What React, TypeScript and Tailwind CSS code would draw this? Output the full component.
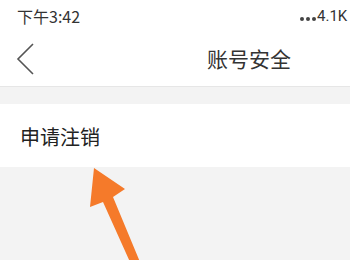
import React from "react";

export default function App() {
  const font = { fontFamily: '"Noto Sans CJK SC", "Noto Sans", Roboto, sans-serif' };
  return (
    <div className="relative w-[350px] h-[260px] overflow-hidden bg-[#f3f3f3]" style={font}>
      <div className="h-[28px] bg-white flex items-center justify-between pl-[17px] text-[16px] leading-none text-[#333]">
        <span className="pt-[4px]">下午3:42</span>
        <span className="pt-[4px] w-[50px] flex items-end whitespace-nowrap">
          <span className="flex gap-[2px] mb-[3px] mr-[1px]">
            <span className="w-[4px] h-[4px] rounded-full bg-[#444]" />
            <span className="w-[4px] h-[4px] rounded-full bg-[#444]" />
            <span className="w-[4px] h-[4px] rounded-full bg-[#444]" />
          </span>
          <span className="text-[15px] text-[#333]" style={{ fontFamily: "Roboto, sans-serif" }}>4.1K</span>
        </span>
      </div>
      <div className="h-[59px] bg-white flex items-center border-b border-[#e6e6e6]">
        <svg width="20" height="34" viewBox="0 0 20 34" className="ml-[15px] mt-[3px]">
          <path d="M18 2 L3 17 L18 32" fill="none" stroke="#555" strokeWidth="1.6" />
        </svg>
        <span className="ml-[172px] text-[21px] leading-none text-[#333] mt-[3px]">账号安全</span>
      </div>
      <div className="h-[17px] bg-[#f3f3f3]" />
      <div className="h-[63px] bg-white flex items-center pl-[20px] text-[20px] leading-none text-[#222]">
        <span className="mt-[2px]">申请注销</span>
      </div>
      <svg className="absolute left-0 top-0" width="350" height="260" viewBox="0 0 350 260">
        <polygon
          points="94,168 125,189 113,197 140,262 130,262 103,202 90,207"
          fill="#f57a2a"
        />
      </svg>
    </div>
  );
}
